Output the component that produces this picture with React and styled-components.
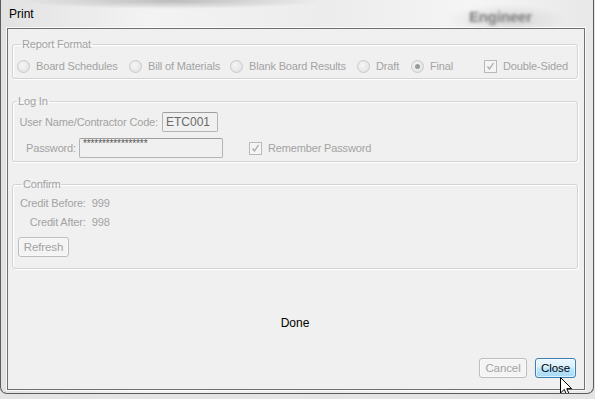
import { createGlobalStyle, styled } from 'styled-components';

const GlobalStyle = createGlobalStyle`
  html, body {
    margin: 0;
    padding: 0;
    background: #e4e4e4;
  }
  body {
    width: 595px;
    height: 399px;
    overflow: hidden;
    font-family: "Liberation Sans", Arial, sans-serif;
    font-size: 11px;
    letter-spacing: -0.15px;
  }
`;

// Aero glass frame round the dialog
const Window = styled.div`
  position: relative;
  box-sizing: border-box;
  width: 594px;
  height: 394px;
  display: flex;
  flex-direction: column;
  padding: 0 8px 3px 6px;
  border: 1px solid #5c5c5c;
  border-top: none;
  border-radius: 0 0 7px 7px;
  background:
    radial-gradient(ellipse 60px 16px at 505px 20px, rgba(150,150,150,0.3), transparent),
    radial-gradient(ellipse 150px 8px at 170px 1px, rgba(120,120,120,0.45), transparent),
    linear-gradient(90deg, #e2e2e2 0%, #f3f3f3 25%, #ececec 55%, #f5f5f5 80%, #e8e8e8 100%);
  overflow: hidden;
`;

const GlassText = styled.span`
  position: absolute;
  left: ${({ $x }) => $x}px;
  top: ${({ $y }) => $y}px;
  font-size: ${({ $size }) => $size}px;
  font-weight: bold;
  color: #7e7e7e;
  filter: blur(1.4px);
  white-space: nowrap;
`;

const TitleBar = styled.div`
  height: 28px;
  display: flex;
  align-items: center;
  padding-left: 2px;
  font-size: 12px;
  letter-spacing: 0;
  color: #000;
  position: relative;
`;

const Client = styled.div`
  flex: 1;
  display: flex;
  flex-direction: column;
  background: #f0f0f0;
  border: 1px solid #707070;
  box-shadow: 0 0 0 1px rgba(255, 255, 255, 0.7);
  padding: 9px 6px 0 4px;
`;

const Group = styled.fieldset`
  margin: 0 0 ${({ $gap }) => $gap || 0}px 0;
  padding: ${({ $pad }) => $pad};
  min-width: 0;
  border: 1px solid #d3d3d3;
  border-radius: 3px;
  box-shadow: inset 1px 1px 0 #fff, 1px 1px 0 #fff;
`;

const Legend = styled.legend`
  margin-left: 4px;
  padding: 0 1px;
  font-size: 11px;
  line-height: 13px;
  color: #a3a3a3;
`;

const OptionRow = styled.div`
  display: grid;
  grid-template-columns: 112px 101px 127px 54px 73px auto;
  align-items: center;
  height: 14px;
`;

const Option = styled.label`
  display: flex;
  align-items: center;
  gap: 6px;
  margin-left: ${({ $ml }) => $ml || 0}px;
  color: #a3a3a3;
  white-space: nowrap;
`;

const Radio = styled.span`
  box-sizing: border-box;
  width: 13px;
  height: 13px;
  border-radius: 50%;
  border: 1px solid #c9c9c9;
  background: radial-gradient(circle at 40% 40%, #f6f6f6, #dedede);
  display: flex;
  align-items: center;
  justify-content: center;
  &::after {
    content: "";
    width: 5px;
    height: 5px;
    border-radius: 50%;
    background: ${({ $checked }) => ($checked ? '#9a9a9a' : 'transparent')};
  }
`;

const Check = styled.span`
  box-sizing: border-box;
  width: 13px;
  height: 13px;
  border: 1px solid #b9b9b9;
  background: #f4f4f4;
  display: flex;
  align-items: center;
  justify-content: center;
`;

const Row = styled.div`
  display: flex;
  align-items: center;
  height: ${({ $h }) => $h}px;
  margin-top: ${({ $top }) => $top || 0}px;
`;

const FieldLabel = styled.span`
  width: ${({ $w }) => $w}px;
  text-align: right;
  padding-right: ${({ $pr }) => $pr}px;
  color: #a3a3a3;
  white-space: nowrap;
`;

const TextBox = styled.div`
  box-sizing: border-box;
  width: ${({ $w }) => $w}px;
  height: ${({ $h }) => $h}px;
  border: 1px solid #b4b4b4;
  border-top-color: #9d9d9d;
  border-radius: 2px;
  background: #f0f0f0;
  color: #6a6a6a;
  font-size: 12px;
  letter-spacing: 0;
  padding: 0 3px;
  display: flex;
  align-items: center;
`;

const Masked = styled.span`
  font-size: 10px;
  letter-spacing: -0.1px;
  color: #555;
  align-self: flex-start;
  line-height: 10px;
`;

const CreditGrid = styled.div`
  display: grid;
  grid-template-columns: auto 1fr;
  column-gap: 6px;
  row-gap: 6px;
  align-items: center;
  padding: 6px 0 0 2px;
  color: #a3a3a3;
  line-height: 13px;
`;

const CreditLabel = styled.span`
  text-align: right;
  white-space: nowrap;
`;

const Button = styled.button`
  box-sizing: border-box;
  width: ${({ $w }) => $w}px;
  height: 20px;
  padding: 0;
  font-family: inherit;
  font-size: 11.5px;
  letter-spacing: -0.1px;
  border-radius: 3px;
  border: 1px solid ${({ $primary }) => ($primary ? '#3c7fb1' : '#bdbdbd')};
  color: ${({ $primary }) => ($primary ? '#000' : '#a3a3a3')};
  background: ${({ $primary }) =>
    $primary
      ? 'linear-gradient(#eaf6fd 0%, #d9f0fc 45%, #bee6fd 50%, #a7d9f5 100%)'
      : 'linear-gradient(#f4f4f4, #f4f4f4)'};
  box-shadow: inset 0 0 0 1px ${({ $primary }) => ($primary ? 'rgba(255,255,255,0.6)' : 'rgba(255,255,255,0.4)')};
`;

const Status = styled.div`
  flex: 1;
  display: flex;
  align-items: center;
  justify-content: center;
  font-size: 12px;
  letter-spacing: 0;
  color: #000;
  padding-top: 18px;
`;

const Footer = styled.div`
  display: flex;
  justify-content: flex-end;
  gap: 8px;
  padding: 0 2px 11px 0;
`;

const Cursor = styled.svg`
  position: absolute;
  left: 559px;
  top: 377px;
`;

function CheckMark() {
  return (
    <svg width="9" height="9" viewBox="0 0 9 9">
      <path d="M1.5 4.5 L3.5 7 L7.5 1" fill="none" stroke="#a8a8a8" strokeWidth="1.3" />
    </svg>
  );
}

const formats = ['Board Schedules', 'Bill of Materials', 'Blank Board Results', 'Draft', 'Final'];

export default function App() {
  return (
    <>
      <GlobalStyle />
      <Window>
        <GlassText $x={468} $y={8} $size={15}>Engineer</GlassText>
        <TitleBar>Print</TitleBar>
        <Client>
          <Group $pad="8px 6px 5px 4px" $gap={16}>
            <Legend>Report Format</Legend>
            <OptionRow>
              {formats.map((f) => (
                <Option key={f}>
                  <Radio $checked={f === 'Final'} />
                  {f}
                </Option>
              ))}
              <Option>
                <Check><CheckMark /></Check>
                Double-Sided
              </Option>
            </OptionRow>
          </Group>

          <Group $pad="4px 6px 3px 0" $gap={16}>
            <Legend>Log In</Legend>
            <Row $h={20}>
              <FieldLabel $w={145} $pr={4}>User Name/Contractor Code:</FieldLabel>
              <TextBox $w={56} $h={20}>ETC001</TextBox>
            </Row>
            <Row $h={20} $top={6}>
              <FieldLabel $w={63} $pr={3}>Password:</FieldLabel>
              <TextBox $w={144} $h={20}>
                <Masked>*****************</Masked>
              </TextBox>
              <Option $ml={26}>
                <Check><CheckMark /></Check>
                Remember Password
              </Option>
            </Row>
          </Group>

          <Group $pad="0 6px 11px 5px">
            <Legend>Confirm</Legend>
            <CreditGrid>
              <CreditLabel>Credit Before:</CreditLabel>
              <span>999</span>
              <CreditLabel>Credit After:</CreditLabel>
              <span>998</span>
            </CreditGrid>
            <Row $h={20} $top={8}>
              <Button $w={51} disabled>Refresh</Button>
            </Row>
          </Group>

          <Status>Done</Status>

          <Footer>
            <Button $w={48} disabled>Cancel</Button>
            <Button $w={41} $primary>Close</Button>
          </Footer>
        </Client>
        <Cursor width="13" height="20" viewBox="0 0 13 20">
          <path d="M0.5 0.5 L0.5 16 L4.3 12.4 L6.8 18.3 L9.2 17.3 L6.8 11.6 L11.6 11.6 Z" fill="#fff" stroke="#000" strokeWidth="1" />
        </Cursor>
      </Window>
    </>
  );
}
